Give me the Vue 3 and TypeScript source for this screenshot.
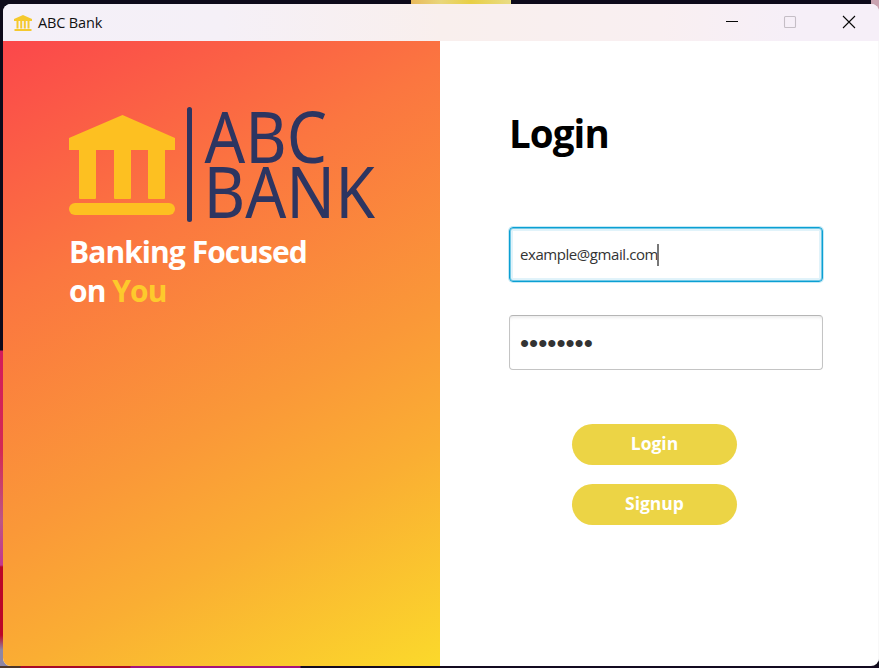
<script setup lang="ts">
import { ref } from 'vue'

const email = ref<string>('example@gmail.com')
const password = ref<string>('password')
const actions: string[] = ['Login', 'Signup']
</script>

<template>
  <div class="desktop">
    <main class="window">
      <header class="titlebar">
        <svg class="app-icon" viewBox="0 0 18 16">
          <path d="M9 0 18 4v2H0V4z" />
          <path d="M2.5 6h2v7.5h-2zM6.2 6h2v7.5h-2zM9.8 6h2v7.5h-2zM13.5 6h2v7.5h-2zM.5 14h17v2H.5z" />
        </svg>
        <span class="app-title">ABC Bank</span>
        <svg class="controls" viewBox="0 0 132 14">
          <path class="ink" d="M1 6.5h12" />
          <rect class="muted" x="59.5" y="1.5" width="11" height="11" rx="1" />
          <path class="ink" d="M118 1l12 12M130 1l-12 12" />
        </svg>
      </header>
      <div class="content">
        <section class="brand">
          <svg class="logo" viewBox="0 0 310 116">
            <g class="bank">
              <path d="M53.5 8 106 31v12H96v48q0 1-1 1H80q-1 0-1-1V43H62v48q0 1-1 1H46q-1 0-1-1V43H27v48q0 1-1 1H11q-1 0-1-1V43H0V31z" />
              <rect y="96" width="106" height="12" rx="6" />
            </g>
            <rect class="rule" x="118" y="0" width="5" height="115" rx="2.5" />
            <text x="135.5" y="55.5" textLength="122.5" lengthAdjust="spacingAndGlyphs">ABC</text>
            <text x="134.5" y="111" textLength="171.5" lengthAdjust="spacingAndGlyphs">BANK</text>
          </svg>
          <p class="tagline">Banking Focused<br />on <em>You</em></p>
        </section>
        <section class="login">
          <h1>Login</h1>
          <div class="field focused"><span class="value">{{ email }}</span><i class="caret"></i></div>
          <div class="field"><span class="mask">{{ '•'.repeat(password.length) }}</span></div>
          <div class="actions">
            <button v-for="label in actions" :key="label" type="button">{{ label }}</button>
          </div>
        </section>
      </div>
    </main>
  </div>
</template>

<style>
body { margin: 0; overflow: hidden; }
</style>

<style scoped>
* { box-sizing: border-box; }
.desktop {
  width: 879px;
  height: 668px;
  padding: 4px 0 2px 3px;
  font-family: "Open Sans", "Noto Sans", sans-serif;
  background:
    linear-gradient(90deg, #e8b95c, #e9d67b 30%, #e8cf45 60%, #e9dc86) 411px 0 / 100px 4px no-repeat,
    linear-gradient(#c9a3b0, #c9a3b0) 871px 0 / 8px 12px no-repeat,
    linear-gradient(90deg, #4d3528 20px, #a80a27 21px 130px, #a5127c 131px 300px, #130a20 301px) 0 666px / 879px 2px no-repeat,
    linear-gradient(#0d0a1a 350px, #d31b5c 351px, #d32a55 450px, #bd5684 520px, #c2388f 565px, #bb0728 567px 635px, #8e86a5 650px) 0 0 / 12px 666px no-repeat,
    #0d0a1a;
}
.window { height: 662px; border-radius: 8px; overflow: hidden; background: #fff; }
.titlebar {
  height: 37px;
  display: flex;
  align-items: center;
  padding: 0 22px 0 11px;
  background: linear-gradient(90deg, #f4f0f8 0%, #f5f0f7 25%, #f9efed 50%, #f9eff1 75%, #f6eff8 90%);
}
.app-icon { width: 18px; height: 16px; fill: #f5c92e; }
.app-title { margin-left: 6px; font-size: 14.5px; line-height: 20px; letter-spacing: -0.15px; color: #111; }
.controls { width: 132px; height: 14px; margin: -1px 0 0 auto; fill: none; stroke-width: 1.1; }
.ink { stroke: #080808; }
.muted { stroke: #c5bec6; }
.content { display: flex; height: 625px; }
.brand {
  flex: none;
  width: 437.4px;
  padding: 66px 0 0 66px;
  background: linear-gradient(152deg, #fb474b 0%, #fb7640 30%, #fa9838 58%, #faae33 74%, #fbd92b 100%);
}
.logo { display: block; width: 310px; height: 116px; overflow: visible; }
.bank { fill: #fdc021; }
.rule { fill: #2d3561; }
.logo text { fill: #2d3561; font-size: 71px; font-family: "Noto Sans", sans-serif; }
.tagline { margin: 9px 0 0; font-size: 30px; line-height: 39px; font-weight: 700; letter-spacing: -0.94px; color: #fff; }
.tagline em { font-style: normal; color: #fdca2c; }
.login { flex: 1; padding: 64px 55px 0 68.6px; border-right: 1px solid #f8f8f8; }
h1 { margin: 0; font-size: 38.5px; line-height: 56px; font-weight: 700; letter-spacing: -0.9px; color: #000; }
.field {
  width: 314px;
  height: 55px;
  margin-top: 33px;
  padding: 0 10px;
  display: flex;
  align-items: center;
  border: 1px solid #c4c4c4;
  border-top-color: #b5b5b5;
  border-radius: 4px;
  font-size: 15px;
  color: #333;
  box-shadow: inset 0 3px 3px -1px #eee;
}
.field.focused {
  margin-top: 66px;
  border-color: #0b9fd3;
  box-shadow: 0 0 0 1px #c4eaf6, inset 0 0 0 1px #73c9e6, inset 0 0 0 3px #e1f3fa;
}
.value { letter-spacing: -0.43px; padding-bottom: 1.5px; }
.caret { width: 2px; height: 22px; margin-left: -1px; background: #777; }
.mask { font: 26px/26px "Liberation Sans", sans-serif; }
.actions { display: flex; flex-direction: column; gap: 19px; width: 165px; margin: 53.5px 0 0 63px; }
button {
  height: 41px;
  padding: 0 0 3px;
  border: 0;
  border-radius: 21px;
  background: #ecd445;
  color: #fff;
  font: 700 17.5px/24px "Open Sans", sans-serif;
}
</style>
